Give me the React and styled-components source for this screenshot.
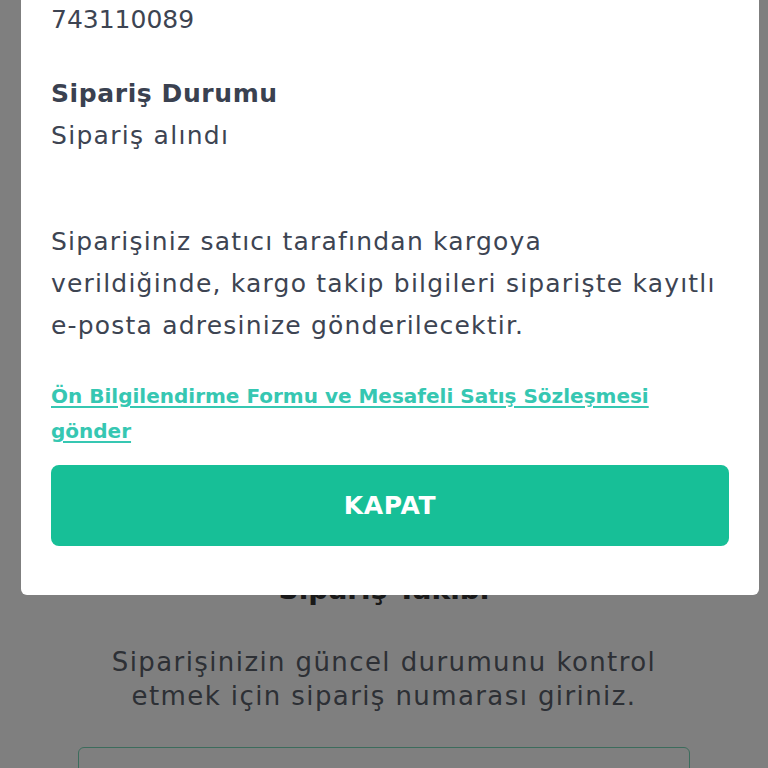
import React from "react";
import styled, { createGlobalStyle } from "styled-components";

const Global = createGlobalStyle`
  html, body { margin: 0; padding: 0; background: #ffffff; }
  body { width: 768px; height: 768px; overflow: hidden; font-family: "DejaVu Sans", "Noto Sans", sans-serif; }
`;

const Page = styled.div`
  display: flex;
  flex-direction: column;
  align-items: center;
  padding-top: 572px;
  height: 768px;
  box-sizing: border-box;
`;

const PageTitle = styled.h1`
  margin: 0;
  font-family: "DejaVu Sans", sans-serif;
  font-weight: 700;
  font-size: 28px;
  line-height: 36px;
  color: #333333;
`;

const PageText = styled.p`
  margin: 37px 0 0;
  width: 600px;
  text-align: center;
  font-family: "DejaVu Sans", sans-serif;
  font-size: 26px;
  line-height: 34px;
  letter-spacing: 1.4px;
  color: #5a606b;
`;

const OrderInput = styled.div`
  margin-top: 34px;
  width: 612px;
  height: 56px;
  box-sizing: border-box;
  border: 1.5px solid #78d8b8;
  border-radius: 6px;
  flex-shrink: 0;
`;

const Overlay = styled.div`
  position: fixed;
  inset: 0;
  background: rgba(0, 0, 0, 0.5);
`;

const Modal = styled.div`
  position: fixed;
  left: 21px;
  right: 9px;
  bottom: 173px;
  background: #ffffff;
  border-radius: 6px;
  padding: 40px 30px 49px;
  display: flex;
  flex-direction: column;
  font-family: "DejaVu Sans", "Noto Sans", sans-serif;
  color: #3d4452;
`;

const Field = styled.div`
  display: flex;
  flex-direction: column;
  margin-top: ${p => p.$gap || 0}px;
`;

const Label = styled.div`
  font-weight: 700;
  font-size: 25px;
  line-height: 42px;
  letter-spacing: 0.6px;
  color: #3a4150;
`;

const Value = styled.div`
  font-size: 25px;
  line-height: 42px;
  font-weight: 400;
  letter-spacing: ${p => (p.$numeric ? 0 : 1.3)}px;
`;

const Note = styled.p`
  margin: 64px 0 0;
  font-size: 25px;
  line-height: 42px;
  font-weight: 400;
  letter-spacing: 1.2px;
  white-space: nowrap;
`;

const DocLink = styled.a`
  margin-top: 32px;
  display: block;
  font-size: 20px;
  line-height: 35px;
  font-weight: 700;
  color: #36c7b2;
  text-decoration: underline;
  text-underline-offset: 3px;
  text-decoration-thickness: 1.5px;
`;

const CloseButton = styled.button`
  margin-top: 16px;
  height: 81px;
  border: none;
  border-radius: 8px;
  background: #17bf97;
  color: #ffffff;
  font-family: "DejaVu Sans", sans-serif;
  font-weight: 700;
  font-size: 25px;
  letter-spacing: 0.7px;
`;

const noteLines = [
  "Siparişiniz satıcı tarafından kargoya",
  "verildiğinde, kargo takip bilgileri siparişte kayıtlı",
  "e-posta adresinize gönderilecektir.",
];

export default function App() {
  return (
    <>
      <Global />
      <Page>
        <PageTitle>Sipariş Takibi</PageTitle>
        <PageText>Siparişinizin güncel durumunu kontrol etmek için sipariş numarası giriniz.</PageText>
        <OrderInput />
      </Page>
      <Overlay />
      <Modal>
        <Field>
          <Value $numeric>743110089</Value>
        </Field>
        <Field $gap={32}>
          <Label>Sipariş Durumu</Label>
          <Value>Sipariş alındı</Value>
        </Field>
        <Note>
          {noteLines.map((line, i) => (
            <React.Fragment key={i}>
              {line}
              {i < noteLines.length - 1 && <br />}
            </React.Fragment>
          ))}
        </Note>
        <DocLink href="#">Ön Bilgilendirme Formu ve Mesafeli Satış Sözleşmesi gönder</DocLink>
        <CloseButton>KAPAT</CloseButton>
      </Modal>
    </>
  );
}
